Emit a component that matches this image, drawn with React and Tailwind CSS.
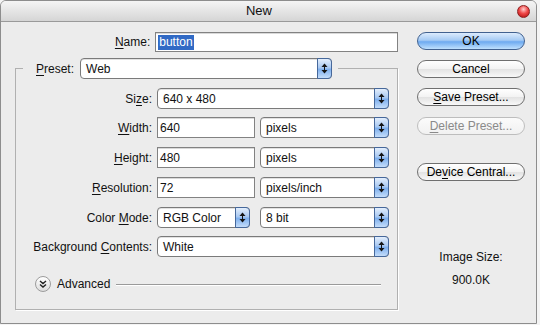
const font = "font-['Liberation_Sans',Arial,sans-serif]"

function Key({ children }) {
  return <span className="underline underline-offset-[2px] decoration-[1px]">{children}</span>
}

function Stepper() {
  return (
    <div className="w-[15px] shrink-0 -my-px -mr-px rounded-r-[4px] border border-[#46689b] bg-[linear-gradient(#e3eefc,#a9c9f2_45%,#7fb0ee_55%,#c4ddfa)] flex items-center justify-center">
      <svg width="7" height="11" viewBox="0 0 7 11">
        <path d="M3.5 0.5 L6.5 4 L0.5 4 Z" fill="#141414" />
        <path d="M3 4 h1 v3 h-1 Z" fill="#141414" />
        <path d="M0.5 7 L6.5 7 L3.5 10.5 Z" fill="#141414" />
      </svg>
    </div>
  )
}

function Select({ value, width, className = "" }) {
  return (
    <div className={`${width} h-[21px] flex items-stretch rounded-[4px] border border-[#7a7a7a] bg-white shadow-[inset_0_1px_0_#e2e2e2] ${className}`}>
      <span className="flex-1 pl-[5px] flex items-center whitespace-nowrap">{value}</span>
      <Stepper />
    </div>
  )
}

function Field({ value, width }) {
  return (
    <div className={`${width} h-[21px] border border-[#828282] bg-white shadow-[inset_0_1px_0_#d9d9d9] pl-[2px] flex items-center`}>
      {value}
    </div>
  )
}

function Row({ label, children, className = "" }) {
  return (
    <div className={`flex items-center gap-[5px] ${className}`}>
      <div className="w-[136px] text-right whitespace-nowrap">{label}</div>
      {children}
    </div>
  )
}

function AquaButton({ children, variant = "normal", className = "" }) {
  const styles = {
    normal: "border-[#6f6f6f] bg-[linear-gradient(#ffffff,#f3f3f3_48%,#e3e3e3_52%,#f8f8f8)] text-black",
    primary: "border-[#41618f] bg-[linear-gradient(#dcebfd,#a6cbf4_45%,#6eaaf0_55%,#bfe0fe)] text-black",
    disabled: "border-[#bdbdbd] bg-[linear-gradient(#fbfbfb,#f1f1f1)] text-[#8a8a8a]",
  }
  return (
    <div className={`w-[108px] h-[18px] rounded-full border flex items-center justify-center leading-none ${styles[variant]} ${className}`}>
      {children}
    </div>
  )
}

function App() {
  return (
    <div className={`w-[540px] h-[325px] bg-[#f4f4f4] text-[12px] text-[#111] ${font}`}>
      <div className="w-[537px] h-[324px] border border-[#8d8d8d] rounded-t-[6px] bg-[#ececec] flex flex-col overflow-hidden">
        {/* Title bar */}
        <div className="h-[21px] shrink-0 border-b border-[#9a9a9a] bg-[linear-gradient(#f5f5f5,#d5d5d5)] flex items-center">
          <span className="flex-1 text-center text-[13px]">New</span>
          <span className="w-[13px] h-[13px] mr-[6px] rounded-full border border-[#8c2020] bg-[radial-gradient(circle_at_50%_30%,#ffd0d0,#f04a4a_45%,#b81414_90%)]" />
        </div>

        <div className="flex">
          {/* Left: form */}
          <div className="w-[397px] shrink-0">
            <div className="flex items-center gap-[5px] mt-[10px]">
              <div className="w-[150px] text-right">
                <Key>N</Key>ame:
              </div>
              <div className="w-[244px] h-[20px] border border-[#828282] bg-white shadow-[inset_0_1px_0_#d9d9d9] pl-[2px] flex items-center">
                <span className="bg-[#316ac5] text-white px-px leading-[15px]">button</span>
              </div>
            </div>

            <fieldset className="ml-[14px] mt-[6px] w-[383px] border border-[#b0b0b0] shadow-[1px_1px_0_#fff]">
              <legend className="ml-[7px] pl-[13px] pr-[6px]">
                <div className="flex items-center gap-[6px]">
                  <span>
                    <Key>P</Key>reset:
                  </span>
                  <Select value="Web" width="w-[252px]" />
                </div>
              </legend>

              <Row className="mt-[9px]" label={<>Si<Key>z</Key>e:</>}>
                <Select value="640 x 480" width="w-[232px]" />
              </Row>
              <Row className="mt-[8px]" label={<><Key>W</Key>idth:</>}>
                <Field value="640" width="w-[98px]" />
                <Select value="pixels" width="w-[129px]" />
              </Row>
              <Row className="mt-[9px]" label={<><Key>H</Key>eight:</>}>
                <Field value="480" width="w-[98px]" />
                <Select value="pixels" width="w-[129px]" />
              </Row>
              <Row className="mt-[9px]" label={<><Key>R</Key>esolution:</>}>
                <Field value="72" width="w-[98px]" />
                <Select value="pixels/inch" width="w-[129px]" />
              </Row>
              <Row className="mt-[9px]" label={<>Color <Key>M</Key>ode:</>}>
                <Select value="RGB Color" width="w-[93px]" />
                <Select value="8 bit" width="w-[129px]" className="ml-[5px]" />
              </Row>
              <Row className="mt-[8px]" label={<>Background <Key>C</Key>ontents:</>}>
                <Select value="White" width="w-[232px]" />
              </Row>

              {/* Advanced toggle */}
              <div className="flex items-center mt-[18px] mb-[16px] ml-[19px] mr-[16px]">
                <div className="w-[16px] h-[16px] rounded-full border border-[#9c9c9c] bg-[linear-gradient(#ffffff,#dedede)] flex items-center justify-center">
                  <svg width="8" height="8" viewBox="0 0 8 8">
                    <path d="M1 1 L4 3.5 L7 1 M1 4.5 L4 7 L7 4.5" stroke="#222" strokeWidth="1.4" fill="none" />
                  </svg>
                </div>
                <span className="ml-[6px]">Advanced</span>
                <div className="flex-1 h-px bg-[#9a9a9a] ml-[6px] shadow-[0_1px_0_#fff]" />
              </div>
            </fieldset>
          </div>

          {/* Right: buttons */}
          <div className="ml-[19px] w-[108px] flex flex-col items-center">
            <AquaButton variant="primary" className="mt-[10px]">OK</AquaButton>
            <AquaButton className="mt-[10px]">Cancel</AquaButton>
            <AquaButton className="mt-[10px]">
              <span><Key>S</Key>ave Preset...</span>
            </AquaButton>
            <AquaButton variant="disabled" className="mt-[11px]">
              <span><Key>D</Key>elete Preset...</span>
            </AquaButton>
            <AquaButton className="mt-[28px]">
              <span>De<Key>v</Key>ice Central...</span>
            </AquaButton>
            <div className="mt-[69px] leading-[14px]">Image Size:</div>
            <div className="mt-[9px] leading-[14px]">900.0K</div>
          </div>
        </div>
      </div>
    </div>
  )
}

export default App
